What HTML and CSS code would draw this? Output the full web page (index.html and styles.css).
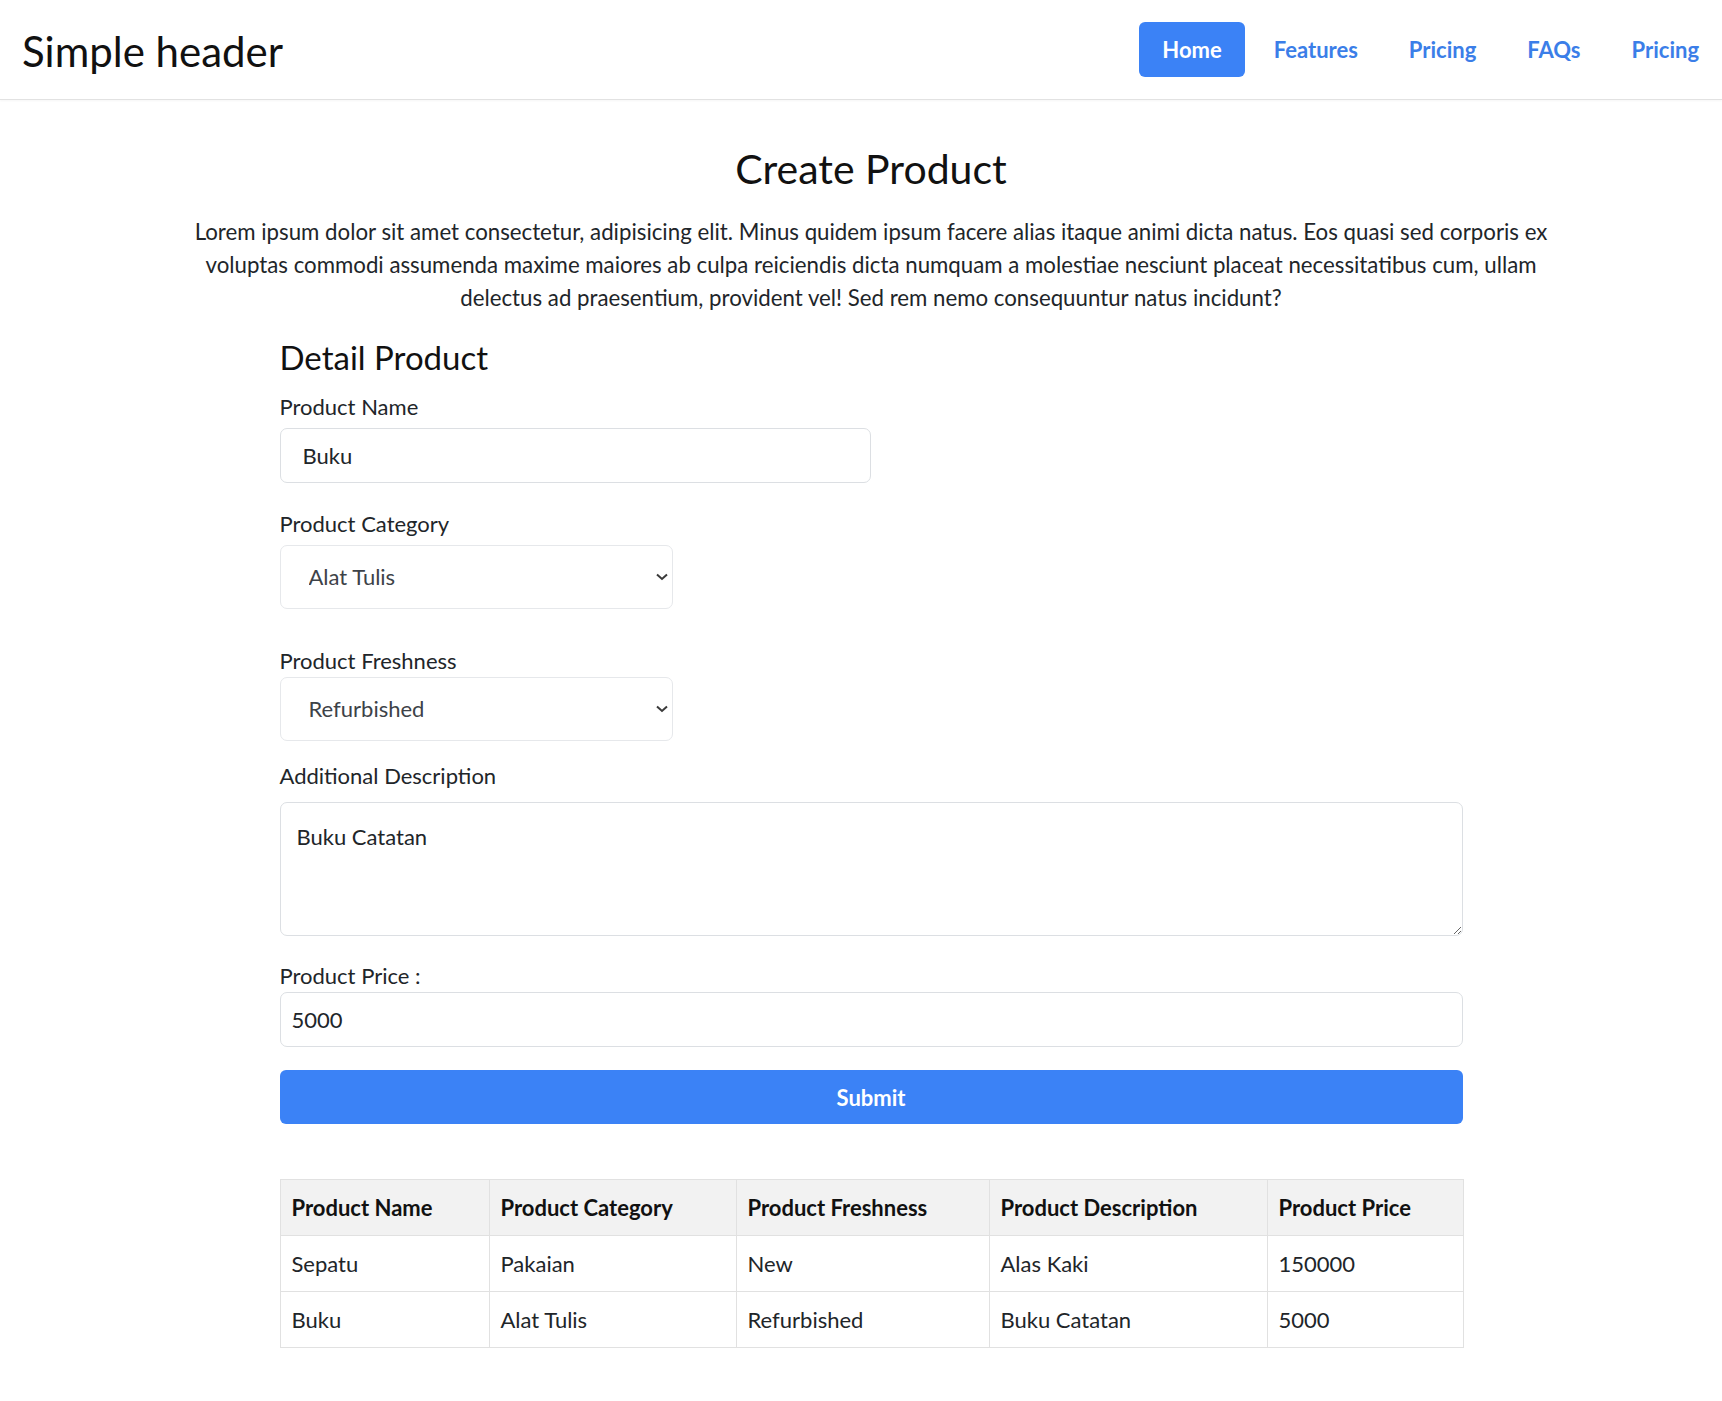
FILE: index.html
```html
<!DOCTYPE html>
<html lang="en">
<head>
<meta charset="utf-8">
<title>Create Product</title>
<link rel="stylesheet" href="styles.css">
</head>
<body>
<header class="site-header">
  <span class="brand">Simple header</span>
  <nav class="nav">
    <a class="nav-link active" href="#">Home</a>
    <a class="nav-link" href="#">Features</a>
    <a class="nav-link" href="#">Pricing</a>
    <a class="nav-link" href="#">FAQs</a>
    <a class="nav-link" href="#">Pricing</a>
  </nav>
</header>
<main class="page">
  <h1 class="title">Create Product</h1>
  <p class="lead">Lorem ipsum dolor sit amet consectetur, adipisicing elit. Minus quidem ipsum facere alias itaque animi dicta natus. Eos quasi sed corporis ex voluptas commodi assumenda maxime maiores ab culpa reiciendis dicta numquam a molestiae nesciunt placeat necessitatibus cum, ullam delectus ad praesentium, provident vel! Sed rem nemo consequuntur natus incidunt?</p>
  <div class="content">
    <form class="form">
      <h2 class="section-title">Detail Product</h2>
      <div class="field field-name">
        <label for="name">Product Name</label>
        <input id="name" class="input input-name" type="text" value="Buku">
      </div>
      <div class="field field-category">
        <label for="category">Product Category</label>
        <div class="select-wrap">
          <select id="category" class="select">
            <option>Alat Tulis</option>
            <option>Pakaian</option>
          </select>
          <svg class="chevron" width="12" height="8" viewBox="0 0 12 8"><polyline points="1,1.5 6,6 11,1.5" fill="none" stroke="#3a3a3a" stroke-width="2"/></svg>
        </div>
      </div>
      <div class="field field-fresh">
        <label for="fresh">Product Freshness</label>
        <div class="select-wrap">
          <select id="fresh" class="select">
            <option>Refurbished</option>
            <option>New</option>
          </select>
          <svg class="chevron" width="12" height="8" viewBox="0 0 12 8"><polyline points="1,1.5 6,6 11,1.5" fill="none" stroke="#3a3a3a" stroke-width="2"/></svg>
        </div>
      </div>
      <div class="field field-desc">
        <label for="desc">Additional Description</label>
        <textarea id="desc" class="textarea">Buku Catatan</textarea>
      </div>
      <div class="field field-price">
        <label for="price">Product Price :</label>
        <input id="price" class="input input-price" type="text" value="5000">
      </div>
      <button type="button" class="submit">Submit</button>
    </form>
    <table class="table">
      <colgroup>
        <col class="col-name"><col class="col-cat"><col class="col-fresh"><col class="col-desc"><col class="col-price">
      </colgroup>
      <thead>
        <tr><th>Product Name</th><th>Product Category</th><th>Product Freshness</th><th>Product Description</th><th>Product Price</th></tr>
      </thead>
      <tbody>
        <tr><td>Sepatu</td><td>Pakaian</td><td>New</td><td>Alas Kaki</td><td>150000</td></tr>
        <tr><td>Buku</td><td>Alat Tulis</td><td>Refurbished</td><td>Buku Catatan</td><td>5000</td></tr>
      </tbody>
    </table>
  </div>
</main>
</body>
</html>
```
FILE: styles.css
```css
* { box-sizing: border-box; }
html, body { margin: 0; padding: 0; }
body {
  font-family: Lato, "Open Sans", "Liberation Sans", sans-serif;
  font-size: 22px;
  line-height: 33px;
  color: #212529;
  background: #fff;
}

.site-header {
  display: flex;
  align-items: center;
  justify-content: space-between;
  height: 100px;
  padding: 0 1px 0 22px;
  border-bottom: 1px solid #e2e2e2;
  box-shadow: 0 1px 2px rgba(0,0,0,0.04);
}
.brand {
  font-size: 42px;
  line-height: 52px;
  margin-top: 2px;
  color: #111;
}
.nav {
  display: flex;
  gap: 7px;
}
.nav-link {
  display: block;
  padding: 11px 22px;
  font-size: 22px;
  line-height: 33px;
  font-weight: 700;
  color: #3b7ee8;
  text-decoration: none;
  border-radius: 6px;
}
.nav-link.active {
  background: #3b82f6;
  color: #fff;
  padding: 11px 23px;
}

.page {
  padding: 43px 0 60px 20px;
}
.title {
  margin: 0 0 20px;
  text-align: center;
  font-size: 41px;
  line-height: 52px;
  font-weight: 400;
  color: #111;
}
.lead {
  width: 1390px;
  margin: 0 auto 23px;
  text-align: center;
  font-size: 22.25px;
}
.content {
  width: 1183px;
  margin: 0 auto;
}
.form {
  display: flex;
  flex-direction: column;
}
.section-title {
  margin: 0 0 13px;
  font-size: 33px;
  line-height: 40px;
  font-weight: 400;
  color: #111;
}
.field {
  display: flex;
  flex-direction: column;
  align-items: flex-start;
}
.field label {
  line-height: 33px;
  margin-bottom: 5px;
}
.field-name { margin-bottom: 24px; }
.field-category { margin-bottom: 35px; }
.field-fresh { margin-bottom: 18px; }
.field-fresh label { margin-bottom: 0; }
.field-desc { margin-bottom: 23px; }
.field-desc label { margin-bottom: 10px; }
.field-price { margin-bottom: 23px; }
.field-price label { margin-bottom: 0; }

.input, .select, .textarea {
  font-family: inherit;
  font-size: 22px;
  line-height: 33px;
  color: #212529;
  background: #fff;
  border: 1px solid #dcdfe3;
  border-radius: 7px;
  outline: none;
}
.input {
  height: 55px;
  padding: 10px 22px;
}
.input-name { width: 591px; }
.input-price { width: 100%; padding-left: 11px; }

.select-wrap {
  position: relative;
  width: 393px;
}
.select {
  appearance: none;
  -webkit-appearance: none;
  width: 100%;
  height: 64px;
  padding: 14px 40px 15px 28px;
  color: #3d4248;
  border-color: #e6e8eb;
}
.chevron {
  position: absolute;
  right: 5px;
  top: 28px;
  pointer-events: none;
}
.textarea {
  display: block;
  width: 100%;
  height: 134px;
  padding: 17px 16px;
  resize: both;
}

.submit {
  height: 54px;
  width: 100%;
  border: none;
  border-radius: 6px;
  background: #3b82f6;
  color: #fff;
  font-family: inherit;
  font-size: 22px;
  font-weight: 700;
  line-height: 33px;
}

.table {
  width: 1183px;
  margin-top: 55px;
  border-collapse: collapse;
  table-layout: fixed;
  border: 1px solid #e1e1e1;
}
.col-name { width: 209px; }
.col-cat { width: 247px; }
.col-fresh { width: 253px; }
.col-desc { width: 278px; }
.col-price { width: 196px; }
.table th, .table td {
  padding: 11px 11px;
  line-height: 33px;
  text-align: left;
  border: 1px solid #e1e1e1;
  white-space: nowrap;
}
.table th {
  background: #f2f2f2;
  font-weight: 700;
  color: #111;
}
```
